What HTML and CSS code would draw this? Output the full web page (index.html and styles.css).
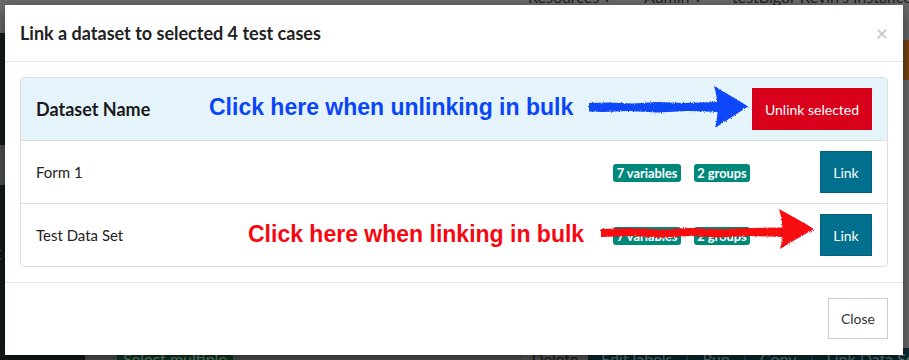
FILE: index.html
```html
<!DOCTYPE html>
<html lang="en">
<head>
<meta charset="utf-8">
<title>Link a dataset</title>
<link rel="stylesheet" href="styles.css">
</head>
<body>
<div class="page">
  <header class="topnav">
    <ul class="navlinks">
      <li class="nav-res">Resources ▾</li>
      <li class="nav-admin">Admin ▾</li>
      <li class="nav-user">testBigor Kevin's Instance</li>
    </ul>
  </header>
  <div class="main">
    <aside class="sidebar">
      <div class="side-item"></div>
      <div class="side-label">t</div>
    </aside>
    <section class="content">
      <div class="banner"><span class="banner-btn"></span></div>
      <div class="toolbar">
        <span class="tb-btn tb-green">Select multiple</span>
        <span class="tb-gap"></span>
        <span class="tb-btn tb-grey">Delete</span>
        <span class="tb-group">
          <span class="tb-item">Edit labels</span>
          <span class="tb-item">Run</span>
          <span class="tb-item">Copy</span>
          <span class="tb-item tb-last">Link Data Set</span>
        </span>
      </div>
    </section>
  </div>
</div>

<div class="modal">
  <div class="modal-header">
    <h4 class="modal-title">Link a dataset to selected 4 test cases</h4>
    <span class="close">×</span>
  </div>
  <div class="modal-body">
    <div class="panel">
      <div class="row row-head">
        <span class="cell-name head-name">Dataset Name</span>
        <button class="btn btn-danger">Unlink selected</button>
      </div>
      <div class="row">
        <span class="cell-name">Form 1</span>
        <span class="badges"><span class="badge badge-vars">7 variables</span><span class="badge badge-groups">2 groups</span></span>
        <button class="btn btn-link">Link</button>
      </div>
      <div class="row">
        <span class="cell-name">Test Data Set</span>
        <span class="badges"><span class="badge badge-vars">7 variables</span><span class="badge badge-groups">2 groups</span></span>
        <button class="btn btn-link">Link</button>
      </div>
    </div>
    <div class="note note-blue">
      <span class="note-text">Click here when unlinking in bulk</span>
      <svg class="arrow arrow-blue" width="162" height="46" viewBox="0 0 162 46">
        <defs>
          <filter id="rough" x="-5%" y="-10%" width="110%" height="120%">
            <feTurbulence type="fractalNoise" baseFrequency="0.9" numOctaves="2" seed="3"/>
            <feDisplacementMap in="SourceGraphic" scale="3"/>
          </filter>
        </defs>
        <g filter="url(#rough)" fill="#0a46f7">
          <path d="M1 19 L20 18.5 L45 19.5 L70 18 L95 19 L131 18 L131 28 L100 27 L70 28.5 L40 27 L15 28 L1 27.5 Z"/>
          <path d="M126 2 C138 9 150 16 160 22.5 C150 29 139 36 127 44 C131 30 130 15 126 2 Z"/>
        </g>
      </svg>
    </div>
    <div class="note note-red">
      <span class="note-text">Click here when linking in bulk</span>
      <svg class="arrow arrow-red" width="216" height="46" viewBox="0 0 216 46">
        <g filter="url(#rough)" fill="#f70710">
          <path d="M1 21 L30 20 L60 21.5 L90 20 L120 21 L150 20 L184 19.5 L184 29 L150 28 L120 29.5 L90 28 L60 29.5 L30 28 L1 29 Z"/>
          <path d="M179 1 C190 7 203 14 214 21 C203 27 191 34 180 41 C184 28 183 14 179 1 Z"/>
        </g>
      </svg>
    </div>
  </div>
  <div class="modal-footer">
    <button class="btn btn-default">Close</button>
  </div>
</div>
</body>
</html>
```

FILE: styles.css
```css
* { box-sizing: border-box; }

html, body {
  margin: 0;
  height: 360px;
  overflow: hidden;
}

body {
  font-family: Lato, "Open Sans", "Liberation Sans", sans-serif;
  background: #666666;
  color: #222;
}

/* ---------- background page (under the overlay) ---------- */
.page {
  display: flex;
  flex-direction: column;
  height: 360px;
}

.topnav {
  height: 33px;
  background: #6b6b6b;
  flex: none;
}

.navlinks {
  list-style: none;
  margin: -11px 0 0 0;
  padding: 0;
  display: flex;
  font-size: 16px;
  line-height: 16px;
  color: #1f1f1f;
  white-space: nowrap;
}

.nav-res { margin-left: 528px; width: 116px; flex: none; }
.nav-admin { width: 88px; flex: none; }
.nav-user { flex: none; }

.main {
  flex: 1;
  display: flex;
  min-height: 0;
}

.sidebar {
  width: 85px;
  background: #141a1a;
  flex: none;
  display: flex;
  flex-direction: column;
}

.side-item {
  margin-top: 112px;
  height: 40px;
  background: #4e5252;
}

.side-label {
  margin-top: 55px;
  font-size: 20px;
  color: #5a5f5f;
  margin-left: -6px;
}

.content {
  flex: 1;
  min-width: 0;
  background: #6c6c6c;
  display: flex;
  flex-direction: column;
  overflow: hidden;
}

.banner {
  display: flex;
  justify-content: flex-end;
  padding-top: 7px;
}

.banner-btn {
  width: 80px;
  height: 40px;
  background: #7a4616;
  margin-right: -20px;
}

.toolbar {
  margin-top: auto;
  height: 12px;
  background: #555555;
  display: flex;
  align-items: flex-start;
  padding-left: 32px;
  font-size: 16px;
  line-height: 20px;
  white-space: nowrap;
}

.tb-btn {
  flex: none;
  height: 30px;
  padding-top: 1px;
  text-align: center;
}

.tb-green {
  width: 116px;
  background: #0e3a20;
  color: #7d8f84;
}

.tb-gap { width: 289px; flex: none; }

.tb-grey {
  width: 66px;
  background: #5e5e5e;
  color: #1a1a1a;
}

.tb-group {
  display: flex;
  background: #0b2c33;
  color: #6f8185;
  height: 30px;
  padding-top: 1px;
  flex: none;
  width: 400px;
}

.tb-item {
  flex: none;
  padding: 0 14px;
  border-right: 2px solid #26464c;
}
.tb-item:first-child { padding-left: 13px; }
.tb-last { border-right: none; }

/* ---------- modal ---------- */
.modal {
  position: absolute;
  left: 5px;
  top: 5px;
  width: 898px;
  height: 350px;
  background: #fff;
  box-shadow: 0 5px 15px rgba(0, 0, 0, 0.5);
  display: flex;
  flex-direction: column;
}

.modal-header {
  display: flex;
  align-items: flex-start;
  padding: 15px;
  border-bottom: 1px solid #e5e5e5;
}

.modal-title {
  flex: 1;
  margin: 0;
  font-size: 18px;
  line-height: 26px;
  font-weight: 700;
  color: #222;
}

.close {
  font-size: 21px;
  font-weight: 700;
  line-height: 1;
  color: #000;
  opacity: 0.2;
  margin-top: 2px;
}

.modal-body {
  position: relative;
  padding: 15px;
}

.panel {
  border: 1px solid #dddddd;
  border-radius: 4px;
  overflow: hidden;
}

.row {
  display: flex;
  align-items: center;
  height: 63px;
  padding: 0 15px;
  border-top: 1px solid #dddddd;
  font-size: 15px;
  color: #222;
}

.row-head {
  height: 62px;
  border-top: none;
  background: #e5f3fa;
}

.cell-name { flex: 1; }

.head-name {
  font-size: 18px;
  font-weight: 700;
  color: #1a1a1a;
}

.badges {
  display: flex;
  gap: 13px;
  margin-right: 70px;
  margin-top: 2px;
}

.badge {
  display: inline-block;
  height: 18px;
  line-height: 18px;
  padding: 0;
  text-align: center;
  white-space: nowrap;
  font-size: 12.8px;
  font-weight: 700;
  color: #fff;
  background: #00897b;
  border-radius: 3px;
}

.badge-vars { width: 68px; }
.badge-groups { width: 56px; }

.btn {
  flex: none;
  font-family: Lato, "Open Sans", "Liberation Sans", sans-serif;
  font-size: 14px;
  height: 42px;
  padding: 0 13px;
  border: 1px solid transparent;
  border-radius: 0;
  white-space: nowrap;
  cursor: pointer;
}

.btn-danger {
  width: 120px;
  padding: 0;
  background: #d9001b;
  color: #fff;
}

.btn-link {
  width: 52px;
  padding: 0;
  background: #016f8e;
  border-color: #01627e;
  color: #fff;
}

.btn-default {
  height: 41px;
  width: 60px;
  padding: 0;
  background: #fff;
  border-color: #cccccc;
  color: #333;
}

/* annotations drawn over the table */
.note {
  position: absolute;
  display: flex;
  align-items: center;
  font-family: "Liberation Sans", Arial, sans-serif;
  font-weight: 700;
  font-size: 23px;
  line-height: 26px;
  white-space: nowrap;
}

.note-blue {
  left: 204px;
  top: 22px;
  color: #0a46f7;
  gap: 15px;
}

.note-red {
  left: 243px;
  top: 151px;
  color: #f70710;
  gap: 16px;
}

.arrow { display: block; flex: none; }
.arrow-red { margin-top: -5px; }

.modal-footer {
  margin-top: auto;
  padding: 15px 15px 16px;
  border-top: 1px solid #e5e5e5;
  display: flex;
  justify-content: flex-end;
}
```
